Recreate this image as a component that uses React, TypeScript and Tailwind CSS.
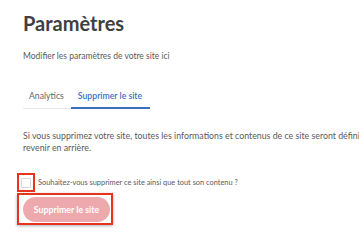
import React from "react";

export default function App() {
  return (
    <div className="w-[359px] h-[249px] overflow-hidden bg-white pl-[23px] font-['Lato',sans-serif]">
      <h1 className="pt-[9px] text-[20px] leading-[28px] font-bold text-[#3f4043]">Paramètres</h1>
      <p className="mt-[13px] text-[8.5px] leading-[12px] text-[#5a5a5a] whitespace-nowrap">Modifier les paramètres de votre site ici</p>
      <div className="mt-[27px] flex w-fit border-b border-[#e6e6e6] whitespace-nowrap">
        <div className="pl-[6px] pr-[7px] pb-[6px] text-[8.7px] leading-[13px] text-[#666]">Analytics</div>
        <div className="pl-[7px] pr-[8px] pb-[5px] -mb-px border-b-2 border-[#3d6fc2] text-[8.7px] leading-[13px] font-semibold text-[#3d6fc2]">Supprimer le site</div>
      </div>
      <div className="mt-[21px] text-[8.8px] leading-[12px] text-[#5a5a5a] whitespace-nowrap">
        <div>Si vous supprimez votre site, toutes les informations et contenus de ce site seront définitivement supprimés. Vous ne pourrez pas</div>
        <div>revenir en arrière.</div>
      </div>
      <div className="mt-[19px] -ml-[6px] flex items-center">
        <div className="w-[18px] h-[19px] border-2 border-[#e8341f] flex items-center justify-center shrink-0">
          <div className="w-[10px] h-[10px] border border-[#d9d9d9] rounded-[1px] bg-white"></div>
        </div>
        <span className="ml-[3px] text-[7.4px] leading-[10px] text-[#5a5a5a] whitespace-nowrap">Souhaitez-vous supprimer ce site ainsi que tout son contenu ?</span>
      </div>
      <div className="mt-[1px] -ml-[6px] w-[96px] h-[32px] border-2 border-[#e8341f] shadow-[0_1px_3px_rgba(0,0,0,0.3)] pl-[4px] pt-[2px]">
        <div className="w-[87px] h-[25px] rounded-full bg-[#eea9ae] flex items-center justify-center text-[8.8px] font-bold text-white whitespace-nowrap">Supprimer le site</div>
      </div>
    </div>
  );
}
